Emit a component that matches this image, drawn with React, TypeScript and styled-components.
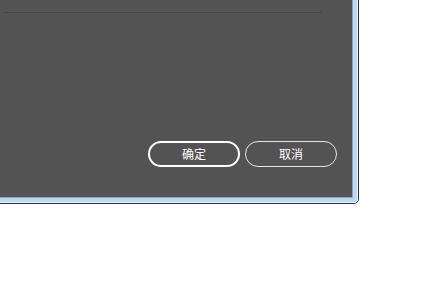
import React from "react";
import styled, { createGlobalStyle } from "styled-components";

const Global = createGlobalStyle`
  html, body { margin: 0; padding: 0; background: #ffffff; overflow: hidden; }
  body { font-family: "Noto Sans CJK SC", "Noto Sans", sans-serif; }
`;

const Frame = styled.div`
  box-sizing: border-box;
  margin: -7px 0 0 -7px;
  width: 366px;
  height: 211px;
  border: 1px solid #2e2e2e;
  border-radius: 5px;
  display: flex;
  overflow: hidden;
`;

const Glass = styled.div`
  flex: 1;
  display: flex;
  background: #b9d8f8;
  border-right: 1px solid #eef6ff;
  border-bottom: 1px solid #eef6ff;
  border-radius: 0 0 4px 0;
  padding: 4px;
`;

const Client = styled.div`
  box-sizing: border-box;
  flex: 1;
  border: 1px solid #8ea3b8;
  border-radius: 1px;
  background: #535353;
  display: flex;
  flex-direction: column;
  padding: 13px 15px 30px 6px;
`;

const Divider = styled.div`
  height: 1px;
  background: #464646;
  margin-right: 15px;
`;

const Spacer = styled.div`
  flex: 1;
`;

const ButtonRow = styled.div`
  display: flex;
  justify-content: flex-end;
  gap: 5px;
`;

const Button = styled.button<{ $primary?: boolean }>`
  box-sizing: border-box;
  width: 92px;
  height: 26px;
  border-radius: 13px;
  border: ${(p) => (p.$primary ? "2px solid #ffffff" : "1px solid #e8e8e8")};
  background: transparent;
  color: #ffffff;
  font-family: "Noto Sans CJK SC", "Noto Sans", sans-serif;
  font-size: 12px;
  line-height: 1;
  padding: 0;
  display: flex;
  align-items: center;
  justify-content: center;
  cursor: pointer;
`;

export default function App() {
  return (
    <>
      <Global />
      <Frame>
        <Glass>
          <Client>
            <Divider />
            <Spacer />
            <ButtonRow>
              <Button $primary>确定</Button>
              <Button>取消</Button>
            </ButtonRow>
          </Client>
        </Glass>
      </Frame>
    </>
  );
}
